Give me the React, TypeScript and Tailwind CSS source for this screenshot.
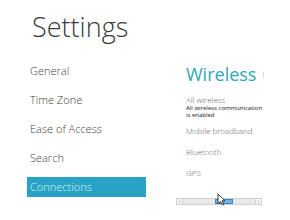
import React from "react";

const MENU = ["General", "Time Zone", "Ease of Access", "Search"];
const OPTIONS = ["Bluetooth", "GPS"];

function Cursor() {
  return (
    <svg className="absolute left-[40px] top-[-6px]" width="9" height="13" viewBox="0 0 9 13">
      <path d="M1 1 L1 11 L3.5 8.5 L5.5 12 L7 11.3 L5 7.8 L8 7.8 Z" fill="#fff" stroke="#222" strokeWidth="0.9" />
    </svg>
  );
}

function Scrollbar() {
  return (
    <div className="relative flex h-[7px] w-[86px] items-stretch border border-[#cfcfcf] bg-[#e9e9e9]">
      <div className="flex w-[6px] items-center justify-center border-r border-[#d4d4d4] bg-[#f3f3f3] text-[5px] leading-none text-[#777]">‹</div>
      <div className="flex-1 pl-[32px]">
        <div className="h-full w-[18px] border border-[#3d86b8] bg-[#6cb4e0]" />
      </div>
      <div className="flex w-[6px] items-center justify-center border-l border-[#d4d4d4] bg-[#f3f3f3] text-[5px] leading-none text-[#777]">›</div>
      <Cursor />
    </div>
  );
}

export default function App() {
  return (
    <div className="flex h-[220px] w-[290px] overflow-hidden bg-white font-['Open_Sans',sans-serif]">
      <div className="w-[176px] shrink-0 pl-[27px]">
        <h1 className="ml-[5px] mt-[13px] text-[27px] font-light leading-[27px] text-[#3a3a3a]">Settings</h1>
        <ul className="mt-[21px] flex w-[119px] flex-col gap-[9px]">
          {MENU.map((item) => (
            <li key={item} className="h-[20px] pl-[3px] text-[11px] font-light leading-[20px] text-[#444]">
              {item}
            </li>
          ))}
          <li className="h-[20px] bg-[#29a3c5] pl-[3px] text-[11px] font-light leading-[20px] text-[#d4f1f9]">Connections</li>
        </ul>
      </div>

      <div className="flex-1 pt-[65px]">
        <div className="flex items-center pl-[10px]">
          <h2 className="text-[18px] leading-[18px] text-[#2fa7ba]">Wireless</h2>
          <span className="ml-[7px] mt-[2px] h-[6px] w-px bg-[#d8d8d8]" />
        </div>
        <div className="mt-[12px] pl-[10px]">
          <p className="text-[8px] font-light leading-[10px] text-[#666]">All wireless</p>
          <p className="text-[6px] leading-[7px] text-[#111]">
            All wireless communication
            <br />
            is enabled
          </p>
        </div>
        <p className="mt-[7px] pl-[10px] text-[8px] font-light leading-[10px] text-[#666]">Mobile broadband</p>
        {OPTIONS.map((option) => (
          <p key={option} className="mt-[11px] pl-[10px] text-[8px] font-light leading-[10px] text-[#666]">
            {option}
          </p>
        ))}
        <div className="mt-[20px]">
          <Scrollbar />
        </div>
      </div>
    </div>
  );
}
